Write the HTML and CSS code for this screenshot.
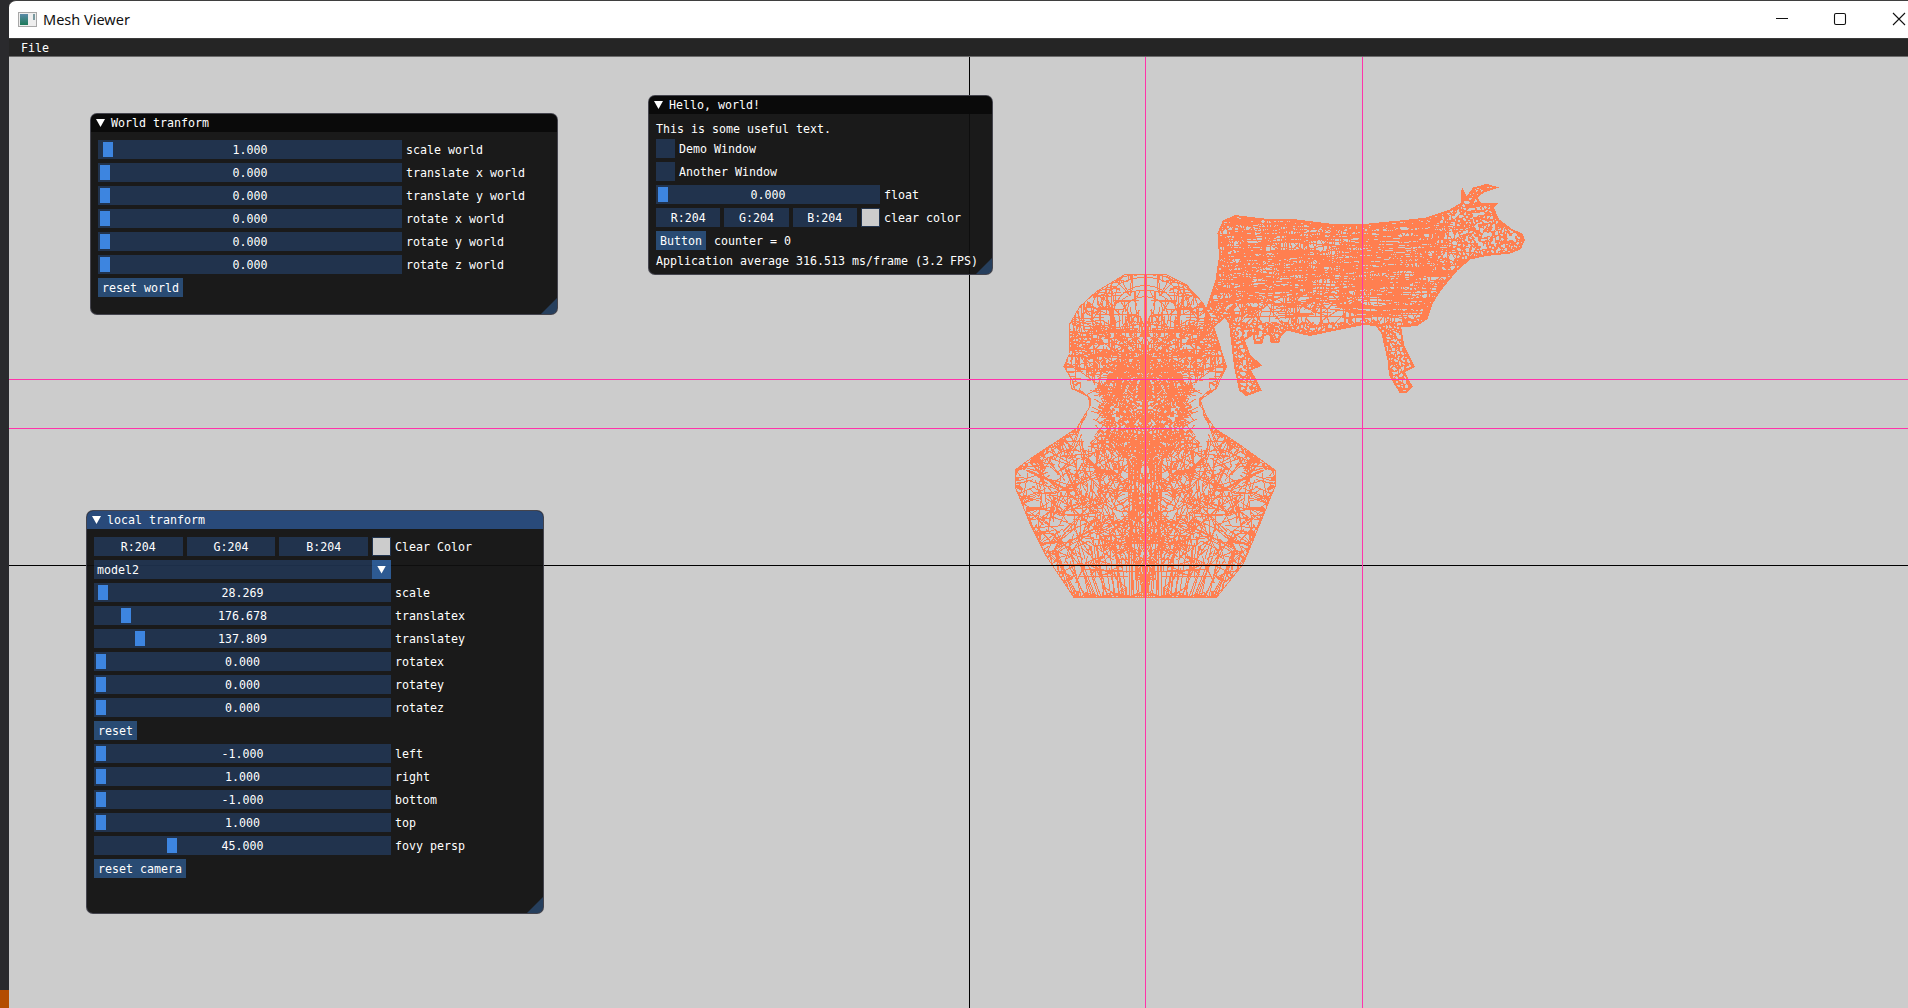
FILE: index.html
```html
<!DOCTYPE html>
<html lang="en">
<head>
<meta charset="utf-8">
<title>Mesh Viewer</title>
<link rel="stylesheet" href="styles.css">
</head>
<body>
<div class="desktop">
  <div class="edge"><div class="taskbar-peek"></div></div>
  <div class="app">
    <header class="titlebar">
      <svg class="appicon" width="20" height="15" viewBox="0 0 20 15">
        <defs><linearGradient id="ig" x1="0" y1="0" x2="0" y2="1"><stop offset="0" stop-color="#5a8aa8"/><stop offset="1" stop-color="#1c7a58"/></linearGradient></defs>
        <rect x="0.5" y="0.5" width="18" height="14" fill="#eee" stroke="#a8a8a8"/>
        <rect x="2" y="2" width="8" height="11" fill="url(#ig)"/>
        <rect x="15" y="2" width="2" height="6" fill="#7a9aa0"/>
      </svg>
      <span class="apptitle">Mesh Viewer</span>
      <div class="controls">
        <svg class="ctl ctl-min" width="14" height="14" viewBox="0 0 14 14"><path d="M1 6.5H13" fill="none" stroke="#111"/></svg>
        <svg class="ctl" width="14" height="14" viewBox="0 0 14 14"><rect x="1.5" y="1.5" width="11" height="11" rx="1.5" fill="none" stroke="#111" stroke-width="1.1"/></svg>
        <svg class="ctl" width="14" height="14" viewBox="0 0 14 14"><path d="M1 1L13 13M13 1L1 13" fill="none" stroke="#111" stroke-width="1.1"/></svg>
      </div>
    </header>
    <nav class="menubar"><span class="menuitem">File</span></nav>
    <main class="canvas">
      <svg id="scene" class="scene" viewBox="9 57 1899 951" width="1899" height="951"></svg>

      <section class="win win-world">
        <div class="wintitle"><i class="arrow"></i><span>World tranform</span></div>
        <div class="winbody">
          <div class="row"><div class="slider"><i class="grab" style="left:5px"></i>1.000</div><span>scale world</span></div>
          <div class="row"><div class="slider"><i class="grab" style="left:2px"></i>0.000</div><span>translate x world</span></div>
          <div class="row"><div class="slider"><i class="grab" style="left:2px"></i>0.000</div><span>translate y world</span></div>
          <div class="row"><div class="slider"><i class="grab" style="left:2px"></i>0.000</div><span>rotate x world</span></div>
          <div class="row"><div class="slider"><i class="grab" style="left:2px"></i>0.000</div><span>rotate y world</span></div>
          <div class="row"><div class="slider"><i class="grab" style="left:2px"></i>0.000</div><span>rotate z world</span></div>
          <div class="row"><button class="btn">reset world</button></div>
        </div>
        <i class="grip"></i>
      </section>

      <section class="win win-hello">
        <div class="wintitle"><i class="arrow"></i><span>Hello, world!</span></div>
        <div class="winbody">
          <div class="line">This is some useful text.</div>
          <div class="row"><i class="check"></i><span>Demo Window</span></div>
          <div class="row"><i class="check"></i><span>Another Window</span></div>
          <div class="row"><div class="slider"><i class="grab" style="left:2px"></i>0.000</div><span>float</span></div>
          <div class="row"><div class="rgb"><div class="chan">R:204</div><div class="chan">G:204</div><div class="chan">B:204</div></div><i class="swatch"></i><span>clear color</span></div>
          <div class="row gap8"><button class="btn">Button</button><span>counter = 0</span></div>
          <div class="line">Application average 316.513 ms/frame (3.2 FPS)</div>
        </div>
        <i class="grip"></i>
      </section>

      <section class="win win-local">
        <div class="wintitle active"><i class="arrow"></i><span>local tranform</span></div>
        <div class="winbody">
          <div class="row"><div class="rgb"><div class="chan">R:204</div><div class="chan">G:204</div><div class="chan">B:204</div></div><i class="swatch"></i><span>Clear Color</span></div>
          <div class="row"><div class="combo"><span class="combotext">model2</span><span class="combobtn"><i class="arrow"></i></span></div></div>
          <div class="row"><div class="slider"><i class="grab" style="left:4px"></i>28.269</div><span>scale</span></div>
          <div class="row"><div class="slider"><i class="grab" style="left:27px"></i>176.678</div><span>translatex</span></div>
          <div class="row"><div class="slider"><i class="grab" style="left:41px"></i>137.809</div><span>translatey</span></div>
          <div class="row"><div class="slider"><i class="grab" style="left:2px"></i>0.000</div><span>rotatex</span></div>
          <div class="row"><div class="slider"><i class="grab" style="left:2px"></i>0.000</div><span>rotatey</span></div>
          <div class="row"><div class="slider"><i class="grab" style="left:2px"></i>0.000</div><span>rotatez</span></div>
          <div class="row"><button class="btn">reset</button></div>
          <div class="row"><div class="slider"><i class="grab" style="left:2px"></i>-1.000</div><span>left</span></div>
          <div class="row"><div class="slider"><i class="grab" style="left:2px"></i>1.000</div><span>right</span></div>
          <div class="row"><div class="slider"><i class="grab" style="left:2px"></i>-1.000</div><span>bottom</span></div>
          <div class="row"><div class="slider"><i class="grab" style="left:2px"></i>1.000</div><span>top</span></div>
          <div class="row"><div class="slider"><i class="grab" style="left:73px"></i>45.000</div><span>fovy persp</span></div>
          <div class="row"><button class="btn">reset camera</button></div>
        </div>
        <i class="grip"></i>
      </section>
    </main>
  </div>
</div>
<script src="script.js"></script>
</body>
</html>
```
FILE: styles.css
```css
* { box-sizing: border-box; }
html, body { margin: 0; height: 100%; overflow: hidden; }
body { background: #2b2b2e; }
.desktop { display: flex; width: 1908px; height: 1008px; }
.edge { width: 9px; background: #2a2a2d; display: flex; flex-direction: column; justify-content: flex-end; }
.taskbar-peek { height: 18px; background: #b34c00; }
.app { flex: 1; display: flex; flex-direction: column; min-width: 0; }
.titlebar {
  height: 38px; flex: none; background: #fff; border-top: 1px solid #3f3f3f;
  border-top-left-radius: 7px; display: flex; align-items: center; padding-left: 9px;
}
.appicon { flex: none; }
.apptitle { margin-left: 5px; margin-bottom: 2px; font: 14.5px "Noto Sans", "Open Sans", sans-serif; color: #111; }
.controls { margin-left: auto; display: flex; gap: 45px; margin-right: 2px; margin-bottom: 2px; }
.ctl { display: block; }
.ctl-min { margin-right: -1px; }
.menubar {
  height: 19px; flex: none; background: #252525; border-top: 1px solid #3a3a3a; border-bottom: 1px solid #6b6b6b;
  display: flex; align-items: center; padding-left: 12px;
  font: 11.63px "DejaVu Sans Mono", monospace; color: #fff;
}
.menuitem { padding-top: 1px; }
.canvas { flex: 1; position: relative; background: #ccc; overflow: hidden; }
.scene { position: absolute; left: 0; top: 0; display: block; }

.win {
  position: absolute; border: 1px solid rgba(110,110,128,.5); border-radius: 7px; overflow: hidden;
  background: rgba(15,15,15,.94); color: #fff;
  font: 11.63px/13px "DejaVu Sans Mono", monospace;
}
.win-world { left: 81px; top: 56px; width: 468px; height: 202px; }
.win-hello { left: 639px; top: 38px; width: 345px; height: 180px; }
.win-local { left: 77px; top: 453px; width: 458px; height: 404px; }

.wintitle { height: 18px; background: #0a0a0a; display: flex; align-items: center; gap: 6px; padding-left: 5px; }
.wintitle span { padding-top: 1px; }
.wintitle.active { background: #294a7a; }
.arrow { flex: none; display: block; width: 9px; height: 8px; background: #fff; clip-path: polygon(0 0, 100% 0, 50% 100%); }
.winbody { padding: 8px 7px; display: flex; flex-direction: column; gap: 4px; }
.row { height: 19px; display: flex; align-items: center; gap: 4px; white-space: pre; }
.row.gap8 { gap: 8px; }
.row > span { padding-top: 1px; }
.line { height: 13px; white-space: pre; padding-top: 1px; }
.slider {
  position: relative; height: 19px; flex: none; background: rgba(41,74,122,.54); padding-top: 1px;
  display: flex; align-items: center; justify-content: center;
}
.win-world .slider { width: 304px; }
.win-hello .slider { width: 224px; }
.win-local .slider { width: 297px; }
.grab { position: absolute; top: 2px; width: 10px; height: 15px; background: #3d85e0; }
.btn {
  height: 19px; border: 0; border-radius: 0; margin: 0; padding: 1px 4px 0; flex: none;
  background: rgba(66,150,250,.4); color: #fff; font: inherit;
}
.check { flex: none; width: 19px; height: 19px; background: rgba(41,74,122,.54); }
.rgb { flex: none; display: flex; gap: 4px; }
.win-hello .rgb { width: 201px; }
.win-local .rgb { width: 274px; }
.chan {
  flex: 1; height: 19px; background: rgba(41,74,122,.54); padding-top: 1px;
  display: flex; align-items: center; justify-content: center;
}
.swatch { flex: none; width: 19px; height: 19px; background: #ccc; border: 1px solid #22344e; }
.combo { width: 297px; height: 19px; display: flex; background: rgba(41,74,122,.54); }
.combotext { flex: 1; padding: 1px 0 0 3px; line-height: 19px; }
.combobtn { width: 19px; background: rgba(66,150,250,.4); display: flex; align-items: center; justify-content: center; }
.grip {
  position: absolute; right: 0; bottom: 0; width: 16px; height: 16px;
  background: rgba(66,150,250,.3); clip-path: polygon(100% 0, 100% 100%, 0 100%);
}
```
FILE: script.js
```js
(function () {
  var seed = 1234567;
  function R() {
    seed = (seed + 0x6D2B79F5) | 0;
    var t = Math.imul(seed ^ (seed >>> 15), 1 | seed);
    t = (t + Math.imul(t ^ (t >>> 7), 61 | t)) ^ t;
    return ((t ^ (t >>> 14)) >>> 0) / 4294967296;
  }
  function map(list, ox, oy) {
    var out = [];
    for (var i = 0; i < list.length; i += 2) out.push([ox + list[i] / 3, oy + list[i + 1] / 3]);
    return out;
  }
  function inside(p, x, y) {
    var c = false;
    for (var i = 0, j = p.length - 1; i < p.length; j = i++) {
      if ((p[i][1] > y) !== (p[j][1] > y) && x < (p[j][0] - p[i][0]) * (y - p[i][1]) / (p[j][1] - p[i][1]) + p[i][0]) c = !c;
    }
    return c;
  }
  function edgeDist(p, x, y) {
    var best = 1e9;
    for (var i = 0, j = p.length - 1; i < p.length; j = i++) {
      var ax = p[j][0], ay = p[j][1], dx = p[i][0] - ax, dy = p[i][1] - ay;
      var t = ((x - ax) * dx + (y - ay) * dy) / (dx * dx + dy * dy);
      t = Math.max(0, Math.min(1, t));
      var ex = ax + t * dx - x, ey = ay + t * dy - y, d = ex * ex + ey * ey;
      if (d < best) best = d;
    }
    return Math.sqrt(best);
  }
  function f(n) { return Math.round(n * 2) / 2; }
  function seg(a, b, c, d) { return "M" + f(a) + " " + f(b) + "L" + f(c) + " " + f(d); }
  function polyPath(p) {
    return "M" + p.map(function (q) { return f(q[0]) + " " + f(q[1]); }).join("L") + "Z";
  }
  function nearest(pts, k) {
    var s = [];
    for (var i = 0; i < pts.length; i++) {
      var found = [];
      for (var j = 0; j < pts.length; j++) {
        if (j === i) continue;
        var dx = pts[i][0] - pts[j][0], dy = pts[i][1] - pts[j][1], d = dx * dx + dy * dy;
        if (d > 900) continue;
        found.push([d, j]);
      }
      found.sort(function (a, b) { return a[0] - b[0]; });
      for (var n = 0; n < Math.min(k, found.length); n++) {
        var q = pts[found[n][1]];
        s.push(seg(pts[i][0], pts[i][1], q[0], q[1]));
      }
    }
    return s.join("");
  }

  var cow = map([55,190,70,155,105,138,190,148,290,152,400,165,490,165,600,155,680,145,750,122,785,100,788,62,800,85,820,55,860,45,888,52,850,65,828,82,840,100,888,102,878,112,895,150,935,180,965,192,972,210,960,235,930,248,860,255,810,265,770,300,720,360,695,400,680,445,650,465,600,470,610,530,640,590,610,605,635,650,620,665,600,665,585,640,570,615,565,570,548,490,530,465,490,462,400,480,330,495,260,478,240,500,235,515,215,515,210,490,190,495,185,518,165,518,160,490,130,510,150,560,182,585,150,600,182,660,140,675,120,660,105,590,90,460,75,440,40,470,9,501,20,420,50,330,60,260], 1200, 170);

  var bust = map([378,42,495,42,560,75,610,130,640,200,660,260,680,320,660,360,650,385,600,420,620,470,645,505,720,555,825,630,825,680,780,790,730,910,650,1012,222,1012,140,890,90,790,45,680,45,630,100,590,230,505,270,440,265,410,215,385,210,350,192,320,208,280,210,190,240,140,290,95], 1000, 260);

  function buildCow() {
    var pts = [], s = "";
    for (var n = 0; n < 30000; n++) {
      var x = 1203 + R() * 322, y = 185 + R() * 212;
      if (!inside(cow, x, y)) continue;
      var dist = edgeDist(cow, x, y), prob = 0.03;
      if (x < 1255 || x > 1415) prob = 0.12;
      if (x > 1435) prob = 0.35;
      if (dist < 6) prob = 0.65;
      if (x > 1460) prob = 0.85;
      if (y > 322) prob = 0.95;
      if (x < 1235 && y > 280) prob = 0.95;
      if (x < 1228) prob = Math.max(prob, 0.6);
      if (R() < prob) pts.push([x, y]);
    }
    s += nearest(pts, 5);
    var parts = [];
    for (var i = 0; i < 780; i++) {
      var cx = 1222 + R() * 225, cy = 212 + R() * 105;
      var len = 12 + R() * 50;
      var a = R() < 0.5 ? (R() - 0.5) * 0.25 : (R() < 0.5 ? Math.PI / 2 + (R() - 0.5) * 0.5 : (R() - 0.5) * 2.4);
      parts.push(seg(cx - Math.cos(a) * len / 2, cy - Math.sin(a) * len / 2, cx + Math.cos(a) * len / 2, cy + Math.sin(a) * len / 2));
    }
    for (var h = 0; h < 90; h++) {
      var ly = 224 + R() * 90, lx = 1335 + R() * 60;
      parts.push(seg(lx, ly, lx + 18 + R() * 35, ly + (R() - 0.5) * 3));
    }
    return s + parts.join("");
  }

  function buildBust() {
    var parts = [], C = 1145;
    function both(a, b, c, d) { parts.push(seg(C + a, b, C + c, d), seg(C - a, b, C - c, d)); }
    function bundle(dx, ys, n, off) {
      for (var m = 0; m < n; m++) {
        var ox = (R() - 0.5) * off, oy = (R() - 0.5) * off;
        for (var i = 1; i < dx.length; i++) both(dx[i - 1] + ox, ys[i - 1] + oy, dx[i] + ox, ys[i] + oy);
      }
    }
    var pts = [];
    for (var n = 0; n < 26000; n++) {
      var dx = R() * 135, y = 272 + R() * 326, x = C + dx;
      if (!inside(bust, x, y)) continue;
      var dist = edgeDist(bust, x, y), prob = 0.015;
      var ne = (dx * dx) / (42 * 42) + ((y - 405) * (y - 405)) / (60 * 60);
      if (ne < 1) prob = 0.7;
      if (dist < 2.5) prob = 0.4;
      if (y > 430 && y < 470 && dist < 5) prob = 0.6;
      if (y > 460 && y < 545 && dx < 50) prob = 0.06;
      if (y > 330 && y < 375 && dx < 60) prob = Math.max(prob, 0.16);
      if (R() < prob) pts.push([x, y]);
    }
    var near = nearest(pts, 4);
    var mirrored = near.replace(/M([\d.]+) ([\d.]+)L([\d.]+) ([\d.]+)/g, function (m, a, b, c, d) {
      return seg(2 * C - a, b, 2 * C - c, d);
    });
    /* neck and face: short strokes that close up the dense centre */
    for (var c0 = 0; c0 < 300; c0++) {
      var nx = R() * 44, ny = 355 + R() * 105, nl = 5 + R() * 12, na = R() * 6.28;
      both(nx, ny, nx + Math.cos(na) * nl, ny + Math.sin(na) * nl);
    }
    /* head: loose rings and a lattice */
    for (var r = 0; r < 7; r++) {
      var rx = 22 + r * 10 + R() * 4, ry = 20 + r * 8.5 + R() * 4, cy = 318 - r * 1.5, prev = null;
      for (var t = -1.57; t <= 1.3; t += 0.28) {
        var px = Math.cos(t) * rx, py = cy + Math.sin(t) * ry;
        if (prev) both(prev[0], prev[1], px, py);
        prev = [px, py];
      }
    }
    for (var h = 0; h < 260; h++) {
      var hx = R() * 82, hy = 278 + R() * 100, hl = 8 + R() * 24;
      var ha = R() < 0.35 ? (R() - 0.5) * 0.3 : (R() < 0.5 ? Math.PI / 2 + (R() - 0.5) * 0.4 : R() * 6.28);
      both(hx, hy, hx + Math.cos(ha) * hl, hy + Math.sin(ha) * hl);
    }
    /* chest: open triangles */
    for (var i = 0; i < 400; i++) {
      var x0 = R() * 130, y0 = 440 + R() * 125;
      var ang = R() * Math.PI * 2, l = 10 + R() * 26;
      both(x0, y0, x0 + Math.cos(ang) * l, y0 + Math.sin(ang) * l);
    }
    /* curved bands */
    bundle([65, 62, 45, 29], [440, 457, 470, 474], 4, 4);
    bundle([95, 59, 32], [553, 533, 520], 3, 5);
    bundle([51, 71, 95], [530, 540, 553], 3, 4);
    bundle([45, 35], [383, 402], 6, 4);
    bundle([32, 14], [370, 380], 5, 3);
    bundle([78, 70, 60, 48], [470, 490, 505, 515], 3, 4);
    bundle([118, 96, 74], [470, 480, 492], 3, 3);
    /* fan at the base */
    for (var k = 0; k < 30; k++) {
      var xb = k * 2.5 + R() * 2;
      both(xb, 597, xb * 1.25 + R() * 10 - 5, 535 + R() * 35);
    }
    for (var v = 0; v < 12; v++) both(R() * 18, 430 + R() * 60, R() * 18, 500 + R() * 97);
    for (var w = 0; w < 5; w++) { var yy = 550 + R() * 30; both(R() * 20, yy, 35 + R() * 60, yy + R() * 4 - 2); }
    for (var z = 0; z < 3; z++) both(0.5 * z, 273, 0.5 * z, 597);
    return near + mirrored + parts.join("");
  }

  var NS = "http://www.w3.org/2000/svg";
  var svg = document.getElementById("scene");
  function el(name, attrs, parent) {
    var e = document.createElementNS(NS, name);
    for (var k in attrs) e.setAttribute(k, attrs[k]);
    (parent || svg).appendChild(e);
    return e;
  }
  var defs = el("defs", {});
  el("path", { d: polyPath(cow) }, el("clipPath", { id: "cowclip" }, defs));
  el("path", { d: polyPath(bust) }, el("clipPath", { id: "bustclip" }, defs));

  function draw(d, clip, width) {
    var o = { fill: "none", stroke: "#ff7f50", "stroke-width": width || 1, "shape-rendering": "crispEdges", d: d };
    if (clip) o["clip-path"] = "url(#" + clip + ")";
    el("path", o);
  }
  draw(buildBust(), "bustclip");
  draw(polyPath(bust));
  draw(buildCow(), "cowclip");
  draw(polyPath(cow), null, 2);

  function line(x1, y1, x2, y2, c) {
    el("line", { x1: x1, y1: y1, x2: x2, y2: y2, stroke: c, "stroke-width": 1, "shape-rendering": "crispEdges" });
  }
  var MAG = "#ff33aa";
  line(969.5, 57, 969.5, 1008, "#000");
  line(9, 565.5, 1908, 565.5, "#000");
  line(1145.5, 57, 1145.5, 1008, MAG);
  line(1362.5, 57, 1362.5, 1008, MAG);
  line(9, 379.5, 1908, 379.5, MAG);
  line(9, 428.5, 1908, 428.5, MAG);
})();
```
